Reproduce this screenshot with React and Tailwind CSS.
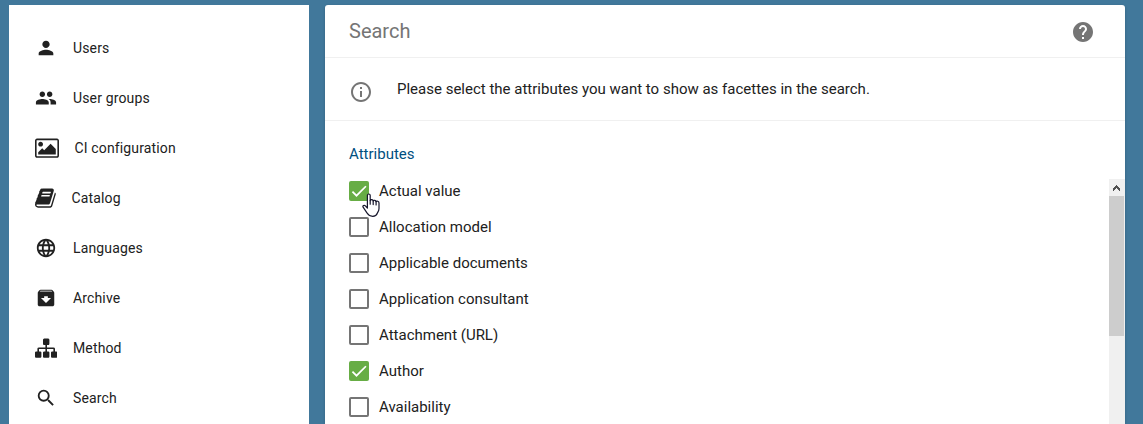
import {
  MdArchive,
  MdHelp,
  MdLanguage,
  MdOutlineInfo,
  MdPeople,
  MdPerson,
  MdSearch,
} from 'react-icons/md'

function PictureIcon() {
  return (
    <svg viewBox="0 0 1920 1792" className="h-[22.4px] w-6" fill="currentColor">
      <path d="M640 576q0 80-56 136t-136 56-136-56-56-136 56-136 136-56 136 56 56 136zm1024 384v448h-1408v-192l320-320 160 160 512-512zm96-704h-1600q-13 0-22.5 9.5t-9.5 22.5v1216q0 13 9.5 22.5t22.5 9.5h1600q13 0 22.5-9.5t9.5-22.5v-1216q0-13-9.5-22.5t-22.5-9.5zm160 32v1216q0 66-47 113t-113 47h-1600q-66 0-113-47t-47-113v-1216q0-66 47-113t113-47h1600q66 0 113 47t47 113z" />
    </svg>
  )
}

function BookIcon() {
  return (
    <svg viewBox="64 0 1664 1792" className="h-[22.4px] w-[20.8px]" fill="currentColor">
      <path d="M1703 478q40 57 18 129l-275 906q-19 64-76.5 107.5t-122.5 43.5h-923q-77 0-148.5-53.5t-99.5-131.5q-24-67-2-127 0-4 3-27t4-37q1-8-3-21.5t-3-19.5q2-11 8-21t16.5-23.5 16.5-23.5q23-38 45-91.5t30-91.5q3-10 .5-30t-.5-28q3-11 17-28t17-23q21-36 42-92t25-90q1-9-2.5-32t.5-28q4-13 22-30.5t22-22.5q19-26 42.5-84.5t27.5-96.5q1-8-3-25.5t-2-26.5q2-8 9-18t18-23 17-21q8-12 16.5-30.5t15-35 16-36 19.5-32 26.5-23.5 36-11.5 47.5 5.5l-1 3q38-9 51-9h761q74 0 114 56t18 130l-274 906q-36 119-71.5 153.5t-128.5 34.5h-869q-27 0-38 15-11 16-1 43 24 70 144 70h923q29 0 56-15.5t35-41.5l300-987q7-22 5-57 38 15 59 43zm-1064 2q-4 13 2 22.5t20 9.5h608q13 0 25.5-9.5t16.5-22.5l21-64q4-13-2-22.5t-20-9.5h-608q-13 0-25.5 9.5t-16.5 22.5zm-83 256q-4 13 2 22.5t20 9.5h608q13 0 25.5-9.5t16.5-22.5l21-64q4-13-2-22.5t-20-9.5h-608q-13 0-25.5 9.5t-16.5 22.5z" />
    </svg>
  )
}

function SitemapIcon() {
  return (
    <svg viewBox="0 0 1792 1792" className="size-[22.4px]" fill="currentColor">
      <path d="M1792 1248v320q0 40-28 68t-68 28h-320q-40 0-68-28t-28-68v-320q0-40 28-68t68-28h96v-192h-512v192h96q40 0 68 28t28 68v320q0 40-28 68t-68 28h-320q-40 0-68-28t-28-68v-320q0-40 28-68t68-28h96v-192h-512v192h96q40 0 68 28t28 68v320q0 40-28 68t-68 28h-320q-40 0-68-28t-28-68v-320q0-40 28-68t68-28h96v-192q0-52 38-90t90-38h512v-192h-96q-40 0-68-28t-28-68v-320q0-40 28-68t68-28h320q40 0 68 28t28 68v320q0 40-28 68t-68 28h-96v192h512q52 0 90 38t38 90v192h96q40 0 68 28t28 68z" />
    </svg>
  )
}

const menu = [
  { label: 'Users', icon: <MdPerson className="size-[22px]" />, slot: 'w-[38px]' },
  { label: 'User groups', icon: <MdPeople className="size-[22px]" />, slot: 'w-[38px]' },
  { label: 'CI configuration', icon: <PictureIcon />, slot: 'w-[39.5px]' },
  { label: 'Catalog', icon: <BookIcon />, slot: 'w-[36.5px]' },
  { label: 'Languages', icon: <MdLanguage className="size-[22px]" />, slot: 'w-[38px]' },
  { label: 'Archive', icon: <MdArchive className="size-[22px]" />, slot: 'w-[38px]' },
  { label: 'Method', icon: <SitemapIcon />, slot: 'w-[38px]' },
  { label: 'Search', icon: <MdSearch className="size-[22px]" />, slot: 'w-[38px]' },
]

const attributes = [
  { label: 'Actual value', checked: true, hovered: true },
  { label: 'Allocation model' },
  { label: 'Applicable documents' },
  { label: 'Application consultant' },
  { label: 'Attachment (URL)' },
  { label: 'Author', checked: true },
  { label: 'Availability' },
]

function Checkbox({ checked }) {
  if (!checked) {
    return <span className="size-5 shrink-0 rounded-[2px] border-2 border-[#757575]" />
  }
  return (
    <span className="size-5 shrink-0 rounded-[2px] bg-[#67ad45]">
      <svg viewBox="0 0 24 24" className="size-5" fill="none" stroke="#fff" strokeWidth="2.1">
        <path d="M4.1 12.7 9 17.6 20.3 6.3" />
      </svg>
    </span>
  )
}

function HandCursor() {
  return (
    <svg
      viewBox="0 0 18 24"
      className="absolute top-5 left-[13px] h-6 w-[18px]"
      fill="#fff"
      stroke="#15152a"
      strokeWidth="1.2"
      strokeLinejoin="round"
      strokeLinecap="round"
    >
      <path d="M5.4 15V2.4C5.4 .5 8.2 .5 8.2 2.4V7.6C8.6 6.3 11 6.4 11.2 7.9 11.8 6.9 13.8 7.1 14 8.6 14.8 7.8 17 8 17 9.9V15.5C17 18 15.8 19 15.3 20.3 14.6 22.4 12.8 23.3 10.7 23.3 8 23.3 6.5 22.4 5.3 20.3L1.1 14.2C.3 12.6 2.3 11.7 3.4 12.8Z" />
      <path d="M8.2 7.6V11.2M11.2 7.9V11.6M14.1 8.6V12" fill="none" />
    </svg>
  )
}

function Scrollbar() {
  return (
    <div className="flex w-4 flex-col bg-[#f0f0f0]">
      <div className="flex h-[17px] w-[15px] items-center justify-center">
        <svg viewBox="0 0 7 6" className="mt-px h-1.5 w-[7px]" fill="#505050" shapeRendering="crispEdges">
          <path d="M3 0h1v1h1v1h1v1h1v3H6V5H5V4H4V3H3v1H2v1H1v1H0V3h1V2h1V1h1z" />
        </svg>
      </div>
      <div className="h-[140px] w-[15px] bg-[#cdcdcd]" />
    </div>
  )
}

export default function App() {
  return (
    <div className="flex h-[424px] w-[1143px] gap-4 overflow-hidden bg-[#41789b] pt-[5px] pl-[9px] font-[Roboto,sans-serif] text-[#212121]">
      <nav className="w-[300px] bg-white pt-[18px] pl-[26px]">
        {menu.map((item) => (
          <div key={item.label} className="flex h-[50px] items-center text-sm tracking-[0.14px]">
            <span className={`flex shrink-0 items-center ${item.slot}`}>{item.icon}</span>
            <span>{item.label}</span>
          </div>
        ))}
      </nav>

      <main className="flex w-[800px] flex-col rounded-t-[3px] bg-white shadow-[0_1px_3px_rgba(0,0,0,0.2)]">
        <header className="flex h-[53px] shrink-0 items-center justify-between border-b border-[#f0f0f0] pr-[30px] pl-6 text-[#757575]">
          <h1 className="text-xl">Search</h1>
          <MdHelp className="mt-0.5 size-6" />
        </header>

        <div className="flex h-[63px] shrink-0 border-b border-[#f0f0f0] pl-6">
          <MdOutlineInfo className="mt-[22px] size-6 text-[#757575]" />
          <p className="mt-[19px] ml-6 text-[15px] leading-6">
            Please select the attributes you want to show as facettes in the search.
          </p>
        </div>

        <h2 className="mt-[21px] pl-6 text-[15px] leading-6 text-[#004f80]">Attributes</h2>

        <div className="mt-[13px] flex h-[245px] shrink-0 justify-between">
          <ul className="-mt-1.5 pl-6">
            {attributes.map((attr) => (
              <li key={attr.label} className="relative flex h-9 items-center gap-2.5 text-[15px]">
                <Checkbox checked={attr.checked} />
                <span>{attr.label}</span>
                {attr.hovered && <HandCursor />}
              </li>
            ))}
          </ul>
          <Scrollbar />
        </div>
      </main>
    </div>
  )
}
